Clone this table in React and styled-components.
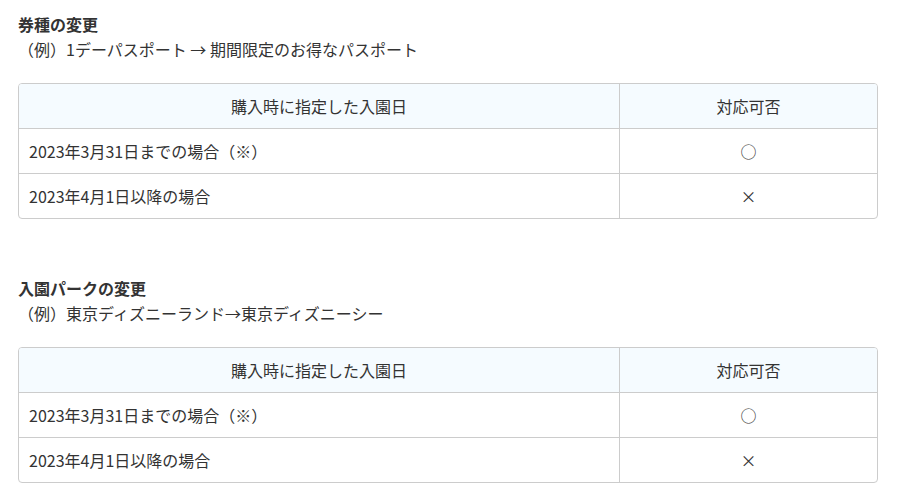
import styled, { createGlobalStyle } from 'styled-components'

const GlobalStyle = createGlobalStyle`
  body {
    margin: 0;
    background: #ffffff;
    font-family: "Noto Sans CJK JP", "Noto Sans", sans-serif;
    color: #333333;
  }
`

const Page = styled.div`
  padding: 12px 37px 0 18px;
`

const Section = styled.section`
  margin-bottom: 57px;
`

const Title = styled.h3`
  margin: 0;
  font-size: 16px;
  font-weight: bold;
  line-height: 24px;
`

const Note = styled.p`
  margin: 1px 0 0;
  font-size: 16px;
  line-height: 24px;
`

const Table = styled.table`
  margin-top: 22px;
  width: 100%;
  border-collapse: separate;
  border-spacing: 0;
  border: 1px solid #cccccc;
  border-radius: 4px;
  overflow: hidden;
  font-size: 16px;
`

const Th = styled.th`
  background: #f5fbff;
  font-weight: normal;
  height: 44px;
  padding: 0;
  text-align: center;
  border-bottom: 1px solid #cccccc;
  border-left: ${p => (p.$first ? 'none' : '1px solid #cccccc')};
  width: ${p => (p.$first ? 'auto' : '257px')};
`

const Td = styled.td`
  height: 44px;
  padding: 0 10px;
  text-align: ${p => (p.$center ? 'center' : 'left')};
  border-top: ${p => (p.$top ? 'none' : '1px solid #cccccc')};
  border-left: ${p => (p.$center ? '1px solid #cccccc' : 'none')};
`

const rows = [
  { label: '2023年3月31日までの場合（※）', mark: '○' },
  { label: '2023年4月1日以降の場合', mark: '×' },
]

const ChangeTable = () => (
  <Table>
    <thead>
      <tr>
        <Th $first>購入時に指定した入園日</Th>
        <Th>対応可否</Th>
      </tr>
    </thead>
    <tbody>
      {rows.map((r, i) => (
        <tr key={r.label}>
          <Td $top={i === 0}>{r.label}</Td>
          <Td $top={i === 0} $center>{r.mark}</Td>
        </tr>
      ))}
    </tbody>
  </Table>
)

const App = () => (
  <>
    <GlobalStyle />
    <Page>
      <Section>
        <Title>券種の変更</Title>
        <Note>（例）1デーパスポート → 期間限定のお得なパスポート</Note>
        <ChangeTable />
      </Section>
      <Section>
        <Title>入園パークの変更</Title>
        <Note>（例）東京ディズニーランド→東京ディズニーシー</Note>
        <ChangeTable />
      </Section>
    </Page>
  </>
)

export default App
